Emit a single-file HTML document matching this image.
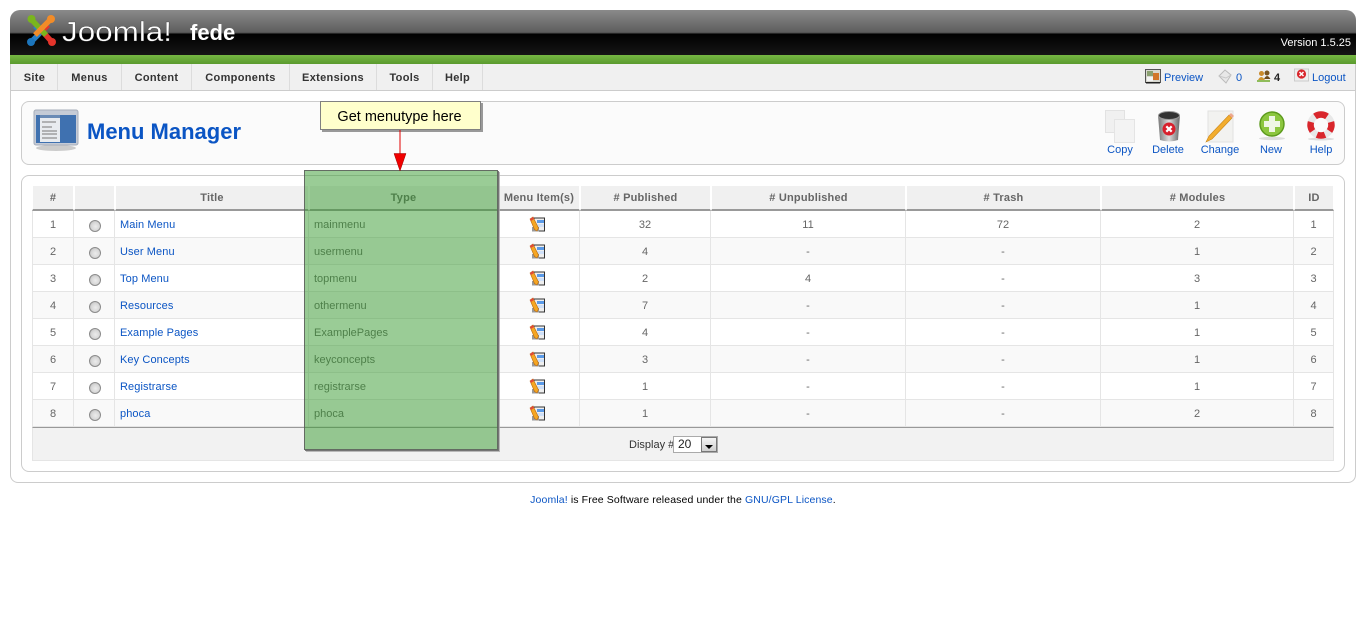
<!DOCTYPE html>
<html><head><meta charset="utf-8"><title>Menu Manager</title>
<style>
html,body{margin:0;padding:0;background:#fff;width:1366px;height:640px;overflow:hidden}
body{font:11px "Liberation Sans",Arial,sans-serif;color:#333;position:relative}
a{color:#0B55C4;text-decoration:none}
.a{position:absolute}
.outer{left:10px;top:55px;width:1344px;height:427px;border:1px solid #ccc;border-top:0;border-radius:0 0 8px 8px}
.head{left:10px;top:10px;width:1346px;height:45px;border-radius:10px 10px 0 0;background:linear-gradient(#8a8a8a 0,#5e5e5e 22px,#4a4a4a 23px,#000 24px,#0a0a0a 34px,#151515 45px)}
.green{left:10px;top:55px;width:1346px;height:9px;background:linear-gradient(#76b843,#5a9a2e)}
.bar{left:11px;top:64px;width:1344px;height:26px;background:#f0f0f0;border-bottom:1px solid #ccc}
.m{position:absolute;top:64px;height:26px;line-height:28px;font-weight:bold;color:#333;text-align:center;border-right:1px solid #dcdcdc;letter-spacing:.32px;box-sizing:content-box}
.panel{position:absolute;left:21px;width:1322px;border:1px solid #ccc;border-radius:8px;box-sizing:content-box}
.lb{position:absolute;top:144px;width:60px;text-align:center;color:#0B55C4;line-height:13px}
table{position:absolute;left:32px;top:186px;width:1302px;table-layout:fixed;border-collapse:separate;border-spacing:0;color:#666}
th{height:22px;padding:1px 0 0;background:#f0f0f0;border-right:1px solid #fff;border-bottom:2px solid #999;font-weight:bold;text-align:center;letter-spacing:.2px;color:#666;border-left:1px solid #fff;box-sizing:content-box}
td{height:25px;padding:1px 0 0;border-bottom:1px solid #e5e5e5;border-right:1px solid #e5e5e5;text-align:center;box-sizing:content-box}
td:first-child{border-left:1px solid #e5e5e5}
tr:nth-child(even) td{background:#f9f9f9}
td.l{text-align:left;padding-left:5px}
td.t a{letter-spacing:.1px}
.r{display:inline-block;width:10px;height:10px;border:1px solid #8c8c8c;border-radius:50%;background:radial-gradient(circle at 55% 55%,#ececec 0,#d8d8d8 50%,#b0b0b0 100%);vertical-align:middle;position:relative;top:1px;left:1px}
.ic{display:block;margin:0 auto;position:relative;left:-1.5px;top:-1px}
.foot{left:32px;top:427px;width:1300px;height:32px;background:#f2f2f2;border:1px solid #e5e5e5;border-top:1px solid #999}
.ov{left:304px;top:170px;width:192px;height:278px;background:rgba(53,153,45,.5);border:1px solid rgba(90,90,90,.85);box-shadow:1px 1px 0 rgba(110,110,110,.9),2px 2px 0 rgba(170,170,170,.8)}
.call{left:320px;top:101px;width:159px;height:27px;background:#ffc;border:1px solid #808080;box-shadow:2px 2px 0 #999;font-size:14.5px;line-height:30px;text-align:center;color:#000;text-indent:-2px}
</style></head>
<body>
<svg width="0" height="0" style="position:absolute"><defs>
<symbol id="mi" viewBox="0 0 16 16">
<rect x="5" y="2" width="10.5" height="13" fill="#eee" stroke="#333" stroke-width="1"/>
<rect x="8" y="4" width="7" height="3" fill="#5a9ae8"/><rect x="8" y="8" width="7" height="3" fill="#cfe0f8"/>
<rect x="3" y="11" width="7" height="4.5" fill="#999"/>
<path d="M1 3 L4 1 L9.5 12 L8 15 L5.5 13.5 Z" fill="#f5a623" stroke="#b96a10" stroke-width=".6"/>
<path d="M1 3 L4 1 L5 3 L2 5Z" fill="#e2483a"/>
</symbol></defs></svg>

<div class="a outer"></div>
<div class="a head"></div>
<div class="a green"></div>
<div class="a bar"></div>

<svg class="a" style="left:26px;top:14px" width="150" height="34" viewBox="0 0 150 34">
<g fill="none" stroke-width="5.4" stroke-linejoin="round">
<path d="M5 28 L15 18 L9 12" stroke="#2a7fc4"/>
<path d="M26 28 L16 17 L22 11" stroke="#e4342b"/>
<path d="M5 5 L20 21" stroke="#7ab51d"/>
<path d="M25 5 L9 21" stroke="#f28c28"/>
</g>
<circle cx="5.5" cy="5" r="4" fill="#7ab51d"/><circle cx="25" cy="5" r="4" fill="#f28c28"/>
<circle cx="5" cy="28" r="4" fill="#1c75bc"/><circle cx="26" cy="28" r="4" fill="#e4342b"/>
<text x="36" y="27" font-family="Liberation Sans" font-size="27.5" fill="#fff" stroke="#222" stroke-width=".3" textLength="110" lengthAdjust="spacingAndGlyphs">Joomla!</text>
</svg>
<div class="a" style="left:190px;top:21px;font-size:22px;font-weight:bold;color:#fff;line-height:24px">fede</div>
<div class="a" style="left:1251px;top:37px;width:100px;text-align:right;color:#fff;line-height:13px">Version 1.5.25</div>

<div class="m" style="left:12px;width:45px">Site</div>
<div class="m" style="left:58px;width:63px">Menus</div>
<div class="m" style="left:122px;width:69px">Content</div>
<div class="m" style="left:192px;width:97px">Components</div>
<div class="m" style="left:290px;width:86px">Extensions</div>
<div class="m" style="left:377px;width:55px">Tools</div>
<div class="m" style="left:433px;width:49px">Help</div>

<svg class="a" style="left:1145px;top:69px" width="16" height="15" viewBox="0 0 16 15"><rect x=".5" y=".5" width="15" height="13" fill="#d8d8d0" stroke="#555"/><rect x="2" y="2" width="6" height="5" fill="#8aa070"/><rect x="8" y="4" width="6" height="7" fill="#d2762a"/><rect x="2" y="8" width="6" height="4" fill="#f4f4f4"/><rect x="1" y="13" width="14" height="1.5" fill="#222"/></svg>
<a class="a" style="left:1164px;top:72px;line-height:13px">Preview</a>
<svg class="a" style="left:1218px;top:69px" width="14" height="15" viewBox="0 0 14 15"><path d="M1 7 L7 1 L13 6 L8 14 Z" fill="#e8e8e8" stroke="#bbb"/><path d="M1 7 L8 9 L13 6" fill="none" stroke="#c8c8c8"/></svg>
<a class="a" style="left:1236px;top:72px;line-height:13px">0</a>
<svg class="a" style="left:1257px;top:70px" width="14" height="13" viewBox="0 0 14 13"><circle cx="4.5" cy="3.5" r="2.5" fill="#c98a2c"/><circle cx="10" cy="3" r="2.5" fill="#7a5520"/><path d="M1 10 Q4 4 8 10Z" fill="#d1942f"/><path d="M7 9 Q10 3 13.5 9Z" fill="#6d4a1c"/><rect x="0" y="10" width="13" height="2" fill="#8fbc5a"/></svg>
<div class="a" style="left:1274px;top:72px;line-height:13px;color:#222;font-weight:bold">4</div>
<svg class="a" style="left:1294px;top:68px" width="15" height="14" viewBox="0 0 15 14"><rect x=".5" y="1" width="14" height="12" fill="#eee" stroke="#ccc"/><circle cx="7.5" cy="6" r="4.6" fill="#d9262c"/><path d="M5.5 4 L9.5 8 M9.5 4 L5.5 8" stroke="#fff" stroke-width="1.5"/></svg>
<a class="a" style="left:1312px;top:72px;line-height:13px">Logout</a>

<div class="panel" style="top:101px;height:62px;background:#fbfbfb"></div>
<svg class="a" style="left:33px;top:109px" width="46" height="44" viewBox="0 0 46 44">
<ellipse cx="23" cy="39" rx="20" ry="3" fill="#ccc"/>
<rect x="1" y="1" width="44" height="35" rx="2" fill="#c5cbd6" stroke="#a6adb9"/>
<rect x="3" y="6" width="40" height="28" fill="#3f71b0"/>
<rect x="7" y="6" width="20" height="27" fill="#e8ebef"/>
<rect x="7" y="6" width="20" height="3" fill="#6b8bb5"/>
<path d="M9 13h14M9 18h10M9 22h15M9 25h15M9 29h15" stroke="#777" stroke-width="1"/>
</svg>
<div class="a" style="left:87px;top:118px;font-size:22px;font-weight:bold;color:#0B55C4;line-height:27px;white-space:nowrap">Menu Manager</div>

<svg class="a" style="left:1105px;top:110px" width="31" height="33" viewBox="0 0 31 33"><rect x=".5" y=".5" width="19" height="22" fill="#f0f0f0" stroke="#e2e2e2"/><rect x="9.5" y="9.5" width="20" height="23" fill="#f3f3f3" stroke="#e4e4e4"/></svg>
<svg class="a" style="left:1157px;top:111px" width="24" height="31" viewBox="0 0 24 31"><defs><linearGradient id="t" x1="0" x2="1"><stop offset="0" stop-color="#777"/><stop offset=".5" stop-color="#ddd"/><stop offset="1" stop-color="#666"/></linearGradient></defs><path d="M1 4 L23 4 L21 29 Q12 32 3 29Z" fill="url(#t)"/><ellipse cx="12" cy="4.5" rx="10.5" ry="4" fill="#333" stroke="#999"/><circle cx="12" cy="18" r="6.5" fill="#d8202c"/><path d="M9.3 15.3 L14.7 20.7 M14.7 15.3 L9.3 20.7" stroke="#fff" stroke-width="2.2"/></svg>
<svg class="a" style="left:1205px;top:110px" width="30" height="33" viewBox="0 0 30 33"><path d="M3 1 L28 1 L28 32 L3 32Z" fill="#f2f2f0" stroke="#e2e2e0"/><path d="M1 32 L4 26 L24 5 L27 8 L7 29Z" fill="#f2ad2e" stroke="#c98518" stroke-width=".6"/><path d="M24 5 L26 3 L29 6 L27 8Z" fill="#eda88e"/></svg>
<svg class="a" style="left:1258px;top:111px" width="28" height="30" viewBox="0 0 28 30"><ellipse cx="14" cy="27.5" rx="13" ry="1.6" fill="#ddd"/><circle cx="14" cy="13" r="12" fill="#8cc63f" stroke="#5c9a1c" stroke-width="1.4"/><path d="M11 5 h6 v5 h5 v6 h-5 v5 h-6 v-5 h-5 v-6 h5z" fill="#eef6e4"/></svg>
<svg class="a" style="left:1307px;top:111px" width="28" height="30" viewBox="0 0 28 30"><ellipse cx="14" cy="28" rx="13" ry="1.5" fill="#ddd"/><circle cx="14" cy="14" r="10.5" fill="none" stroke="#e8e8e8" stroke-width="6.5"/><g fill="none" stroke="#d9262c" stroke-width="6.5"><path d="M8 5.4 A10.5 10.5 0 0 1 20 5.4"/><path d="M5.5 20 A10.5 10.5 0 0 1 4 11"/><path d="M24 11 A10.5 10.5 0 0 1 22.5 20"/><path d="M18 23.7 A10.5 10.5 0 0 1 10 23.7"/></g></svg>
<div class="lb" style="left:1090px"><a>Copy</a></div>
<div class="lb" style="left:1138px"><a>Delete</a></div>
<div class="lb" style="left:1190px"><a>Change</a></div>
<div class="lb" style="left:1241px"><a>New</a></div>
<div class="lb" style="left:1291px"><a>Help</a></div>

<div class="panel" style="top:175px;height:295px;background:#fff"></div>

<table>
<colgroup><col style="width:42px"><col style="width:41px"><col style="width:194px"><col style="width:189px"><col style="width:82px"><col style="width:131px"><col style="width:195px"><col style="width:195px"><col style="width:193px"><col style="width:40px"></colgroup>
<thead><tr><th>#</th><th></th><th>Title</th><th>Type</th><th>Menu Item(s)</th><th># Published</th><th># Unpublished</th><th># Trash</th><th># Modules</th><th>ID</th></tr></thead>
<tbody>
<tr><td>1</td><td><i class="r"></i></td><td class="l t"><a>Main Menu</a></td><td class="l">mainmenu</td><td><svg class="ic" width="16" height="16"><use href="#mi"/></svg></td><td>32</td><td>11</td><td>72</td><td>2</td><td>1</td></tr>
<tr><td>2</td><td><i class="r"></i></td><td class="l t"><a>User Menu</a></td><td class="l">usermenu</td><td><svg class="ic" width="16" height="16"><use href="#mi"/></svg></td><td>4</td><td>-</td><td>-</td><td>1</td><td>2</td></tr>
<tr><td>3</td><td><i class="r"></i></td><td class="l t"><a>Top Menu</a></td><td class="l">topmenu</td><td><svg class="ic" width="16" height="16"><use href="#mi"/></svg></td><td>2</td><td>4</td><td>-</td><td>3</td><td>3</td></tr>
<tr><td>4</td><td><i class="r"></i></td><td class="l t"><a>Resources</a></td><td class="l">othermenu</td><td><svg class="ic" width="16" height="16"><use href="#mi"/></svg></td><td>7</td><td>-</td><td>-</td><td>1</td><td>4</td></tr>
<tr><td>5</td><td><i class="r"></i></td><td class="l t"><a>Example Pages</a></td><td class="l">ExamplePages</td><td><svg class="ic" width="16" height="16"><use href="#mi"/></svg></td><td>4</td><td>-</td><td>-</td><td>1</td><td>5</td></tr>
<tr><td>6</td><td><i class="r"></i></td><td class="l t"><a>Key Concepts</a></td><td class="l">keyconcepts</td><td><svg class="ic" width="16" height="16"><use href="#mi"/></svg></td><td>3</td><td>-</td><td>-</td><td>1</td><td>6</td></tr>
<tr><td>7</td><td><i class="r"></i></td><td class="l t"><a>Registrarse</a></td><td class="l">registrarse</td><td><svg class="ic" width="16" height="16"><use href="#mi"/></svg></td><td>1</td><td>-</td><td>-</td><td>1</td><td>7</td></tr>
<tr><td>8</td><td><i class="r"></i></td><td class="l t"><a>phoca</a></td><td class="l">phoca</td><td><svg class="ic" width="16" height="16"><use href="#mi"/></svg></td><td>1</td><td>-</td><td>-</td><td>2</td><td>8</td></tr>
</tbody></table>

<div class="a foot"></div>
<div class="a" style="left:629px;top:438px;line-height:13px;color:#333;padding-top:1px">Display #</div>
<div class="a" style="left:673px;top:436px;width:43px;height:15px;border:1px solid #aaa;background:#fff;line-height:15px;color:#222;font-size:12px;text-indent:4px">20</div>
<div class="a" style="left:701px;top:437px;width:16px;height:15px;background:linear-gradient(#f4f4f4,#cfcfcf);border:1px solid #777;box-sizing:border-box"></div>
<div class="a" style="left:705px;top:445px;width:0;height:0;border:4px solid transparent;border-top:4px solid #000;border-bottom:0"></div>

<div class="a" style="left:0;top:494px;width:1366px;text-align:center;line-height:13px;font-size:10.5px;letter-spacing:.12px;color:#000"><a>Joomla!</a> is Free Software released under the <a>GNU/GPL License</a>.</div>

<div class="a ov"></div>
<div class="a call">Get menutype here</div>
<svg class="a" style="left:390px;top:130px" width="20" height="42" viewBox="0 0 20 42"><path d="M10 0 V24" stroke="#e00000" stroke-width="1"/><path d="M4 23.5 H16 L10 41Z" fill="#f00000" stroke="#900" stroke-width=".5"/></svg>
</body></html>
